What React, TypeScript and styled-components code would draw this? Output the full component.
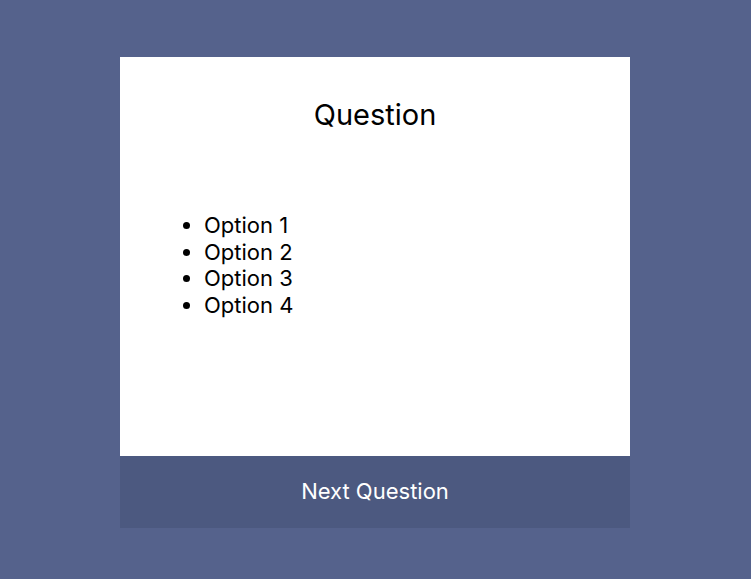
import styled, { createGlobalStyle } from 'styled-components'

const GlobalStyle = createGlobalStyle`
  html, body {
    margin: 0;
    padding: 0;
    background-color: #55628c;
    font-family: Inter, "Noto Sans", sans-serif;
  }
`

const Page = styled.div`
  display: flex;
  justify-content: center;
  align-items: flex-start;
  padding: 57px 1px 0 0;
  min-height: 579px;
  box-sizing: border-box;
`

const Card = styled.div`
  width: 510px;
  display: flex;
  flex-direction: column;
  background-color: #ffffff;
`

const Body = styled.div`
  height: 399px;
  padding: 40px 44px 0;
  box-sizing: border-box;
`

const Title = styled.h1`
  margin: 0;
  text-align: center;
  font-size: 29px;
  font-weight: 400;
  line-height: 35px;
  color: #000000;
`

const OptionList = styled.ul`
  margin: 80px 0 0;
  padding-left: 40px;
  font-size: 22px;
  line-height: 26.5px;
  color: #000000;
`

const NextButton = styled.button`
  height: 72px;
  padding: 0 0 3px;
  border: none;
  background-color: #4c5980;
  color: #ffffff;
  font-family: inherit;
  font-size: 22px;
  cursor: pointer;
`

const options = ['Option 1', 'Option 2', 'Option 3', 'Option 4']

export default function App() {
  return (
    <>
      <GlobalStyle />
      <Page>
        <Card>
          <Body>
            <Title>Question</Title>
            <OptionList>
              {options.map((o) => (
                <li key={o}>{o}</li>
              ))}
            </OptionList>
          </Body>
          <NextButton>Next Question</NextButton>
        </Card>
      </Page>
    </>
  )
}
